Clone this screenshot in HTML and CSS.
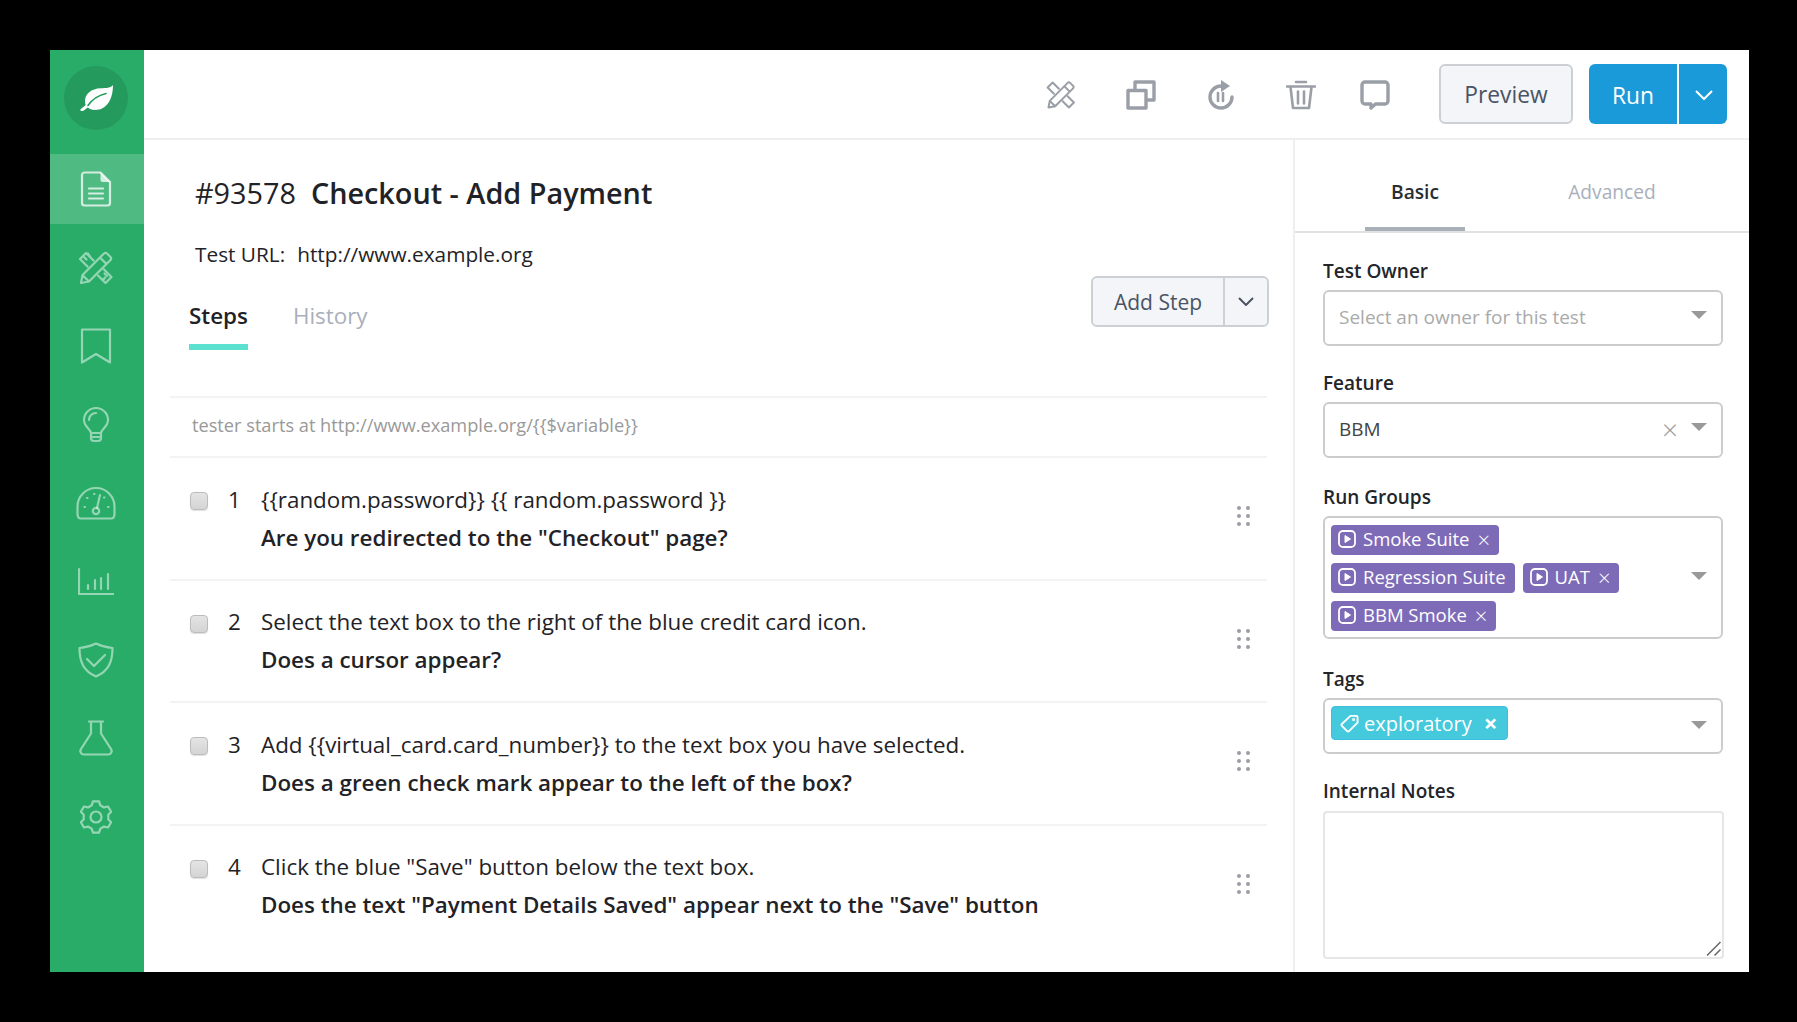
FILE: index.html
```html
<!DOCTYPE html>
<html lang="en">
<head>
<meta charset="utf-8">
<title>Checkout - Add Payment</title>
<link rel="stylesheet" href="styles.css">
</head>
<body>
<div class="window">
  <nav class="sidebar">
    <div class="logo">
      <svg width="33" height="26" viewBox="0 0 33 26"><path class="leaf" d="M33 0C31 3 26 3 21 3.200 11 3.500 5 9 5 16c0 2.500.5 4 1.500 5.500C9 24 12 25 15 25 27 25 33 14 33 0z"/><path class="leaf-stem" d="M9 19.500L2 25"/><path class="leaf-vein" d="M8 20.500C12 14.500 18 10.500 26 8.500"/></svg>
    </div>
    <a class="nav-item active"><svg class="i36" viewBox="0 0 36 36"><path d="M6.500 1.500h16L32 11v21a2.500 2.500 0 0 1-2.500 2.500h-23A2.500 2.500 0 0 1 4 32V4a2.500 2.500 0 0 1 2.500-2.500z"/><path class="soft" d="M22.500 1.500V9a2 2 0 0 0 2 2H32z"/><path d="M11 17.500h14M11 22.500h14M11 27.500h14"/></svg></a>
    <a class="nav-item"><svg class="i36" viewBox="0 0 36 36"><path d="M3 33l1.500-8L26 3.500a2 2 0 0 1 3 0L32.500 7a2 2 0 0 1 0 3L11 31.500zM4.500 25l6.500 6.500M22 7.500l6.500 6.500"/><path d="M15.500 10.500L8 3 2 9l7.500 7.500M20 25.500L27.500 33l6-6L26 19.500M6 7l2.500 2.500M10 3.500L13 8M25 30l2-2.500M29 26l-2.500-2.500"/></svg></a>
    <a class="nav-item"><svg class="i36" viewBox="0 0 36 36"><path d="M4 1.500h28v33L18 26 4 34.500z"/></svg></a>
    <a class="nav-item"><svg class="i36" viewBox="0 0 36 36"><path d="M13 26c0-4-7-6-7-13a12 12 0 0 1 24 0c0 7-7 9-7 13zM13 26v5a3 3 0 0 0 3 3h4a3 3 0 0 0 3-3v-5M13 30h10M11 13a7 7 0 0 1 7-7"/></svg></a>
    <a class="nav-item"><svg class="i40" viewBox="0 0 40 34"><path d="M5 32.500Q1.500 32.500 1.500 28V20.500a18.500 18.500 0 0 1 37 0V28q0 4.500-3.500 4.500z"/><circle cx="20" cy="25" r="3.200"/><path d="M21 22l3-13M8.500 21h.5M11 12h.5M18 8h.5M28 11.500h.5M32 21h.5"/></svg></a>
    <a class="nav-item"><svg class="i36" viewBox="0 0 36 36"><path d="M1 6v25h35M10 26v-4M17 26V17M23 26V15M30 26V11"/></svg></a>
    <a class="nav-item"><svg class="i36" viewBox="0 0 36 36"><path d="M18 1.500C13 4 7 5.500 1.500 6c0 14 4 23 16.500 28.500C30.500 29 34.500 20 34.500 6 29 5.500 23 4 18 1.500z"/><path d="M9 17l7 7 11-11"/></svg></a>
    <a class="nav-item"><svg class="i36" viewBox="0 0 36 36"><path d="M11 1.500h14M13 1.500v12L3 29a3.500 3.500 0 0 0 3 5.500h24a3.500 3.500 0 0 0 3-5.500L23 13.500v-12"/></svg></a>
    <a class="nav-item"><svg class="i36" viewBox="0 0 36 36"><polygon transform="translate(18 18)" points="-4.300,-11.700 -3.050,-15.700 3.050,-15.700 4.300,-11.700 7.980,-9.570 12.070,-10.490 15.120,-5.210 12.280,-2.130 12.280,2.130 15.120,5.210 12.070,10.490 7.980,9.570 4.300,11.700 3.050,15.700 -3.050,15.700 -4.300,11.700 -7.980,9.570 -12.070,10.490 -15.120,5.210 -12.280,2.130 -12.280,-2.130 -15.120,-5.210 -12.070,-10.490 -7.980,-9.570"/><circle cx="18" cy="18" r="5.500"/></svg></a>
  </nav>

  <div class="content">
    <header class="topbar">
      <div class="tools">
        <svg class="tool" viewBox="0 0 36 36"><path d="M3 33l1.500-8L26 3.500a2 2 0 0 1 3 0L32.500 7a2 2 0 0 1 0 3L11 31.500zM4.500 25l6.500 6.500M22 7.500l6.500 6.500"/><path d="M15.500 10.500L8 3 2 9l7.500 7.500M20 25.500L27.500 33l6-6L26 19.500"/></svg>
        <svg class="tool" viewBox="0 0 30 30"><path class="thick" d="M2 10.500h18v17.500H2zM9 10V2h19v18h-7.500"/></svg>
        <svg class="tool" viewBox="0 0 30 30"><path class="thick" d="M15 6a11 11 0 1 0 11 11"/><path class="fill" d="M15 0l9 6-9 6z"/><path class="mid" d="M12 13v8M17 13v8"/></svg>
        <svg class="tool" viewBox="0 0 30 30"><path class="mid" d="M1 6.500h28M10 2h10M4.500 7l2.500 21h16l2.500-21M12 11.500v12M18 11.500v12"/></svg>
        <svg class="tool tool-last" viewBox="0 0 30 30"><path class="thick" d="M5 2h20a3 3 0 0 1 3 3v16a3 3 0 0 1-3 3H15.500L11 28v-4H5a3 3 0 0 1-3-3V5a3 3 0 0 1 3-3z"/></svg>
      </div>
      <button class="btn preview">Preview</button>
      <div class="run">
        <span class="run-label">Run</span>
        <span class="run-caret"><svg width="18" height="10" viewBox="0 0 18 10"><path d="M1 1l8 8 8-8"/></svg></span>
      </div>
    </header>

    <div class="body">
      <main class="test">
        <h1 class="title"><span class="num">#93578</span>Checkout - Add Payment</h1>
        <p class="url"><span class="url-label">Test URL:</span>http://www.example.org</p>
        <div class="tabbar">
          <div class="tabs">
            <span class="tab current">Steps</span>
            <span class="tab">History</span>
          </div>
          <div class="add-step">
            <span class="add-label">Add Step</span>
            <span class="add-caret"><svg width="16" height="9" viewBox="0 0 16 9"><path d="M1 1l7 7 7-7"/></svg></span>
          </div>
        </div>
        <div class="start">tester starts at http://www.example.org/{{$variable}}</div>
        <ol class="steps">
          <li class="step">
            <input class="check" type="checkbox" aria-label="Select step 1"><span class="step-num">1</span>
            <div class="step-text"><p>{{random.password}} {{ random.password }}</p><p class="expect">Are you redirected to the "Checkout" page?</p></div>
            <span class="dots"><i></i><i></i><i></i><i></i><i></i><i></i></span>
          </li>
          <li class="step">
            <input class="check" type="checkbox" aria-label="Select step 2"><span class="step-num">2</span>
            <div class="step-text"><p>Select the text box to the right of the blue credit card icon.</p><p class="expect">Does a cursor appear?</p></div>
            <span class="dots"><i></i><i></i><i></i><i></i><i></i><i></i></span>
          </li>
          <li class="step">
            <input class="check" type="checkbox" aria-label="Select step 3"><span class="step-num">3</span>
            <div class="step-text"><p>Add {{virtual_card.card_number}} to the text box you have selected.</p><p class="expect">Does a green check mark appear to the left of the box?</p></div>
            <span class="dots"><i></i><i></i><i></i><i></i><i></i><i></i></span>
          </li>
          <li class="step">
            <input class="check" type="checkbox" aria-label="Select step 4"><span class="step-num">4</span>
            <div class="step-text"><p>Click the blue "Save" button below the text box.</p><p class="expect">Does the text "Payment Details Saved" appear next to the "Save" button</p></div>
            <span class="dots"><i></i><i></i><i></i><i></i><i></i><i></i></span>
          </li>
        </ol>
      </main>

      <aside class="panel">
        <div class="panel-tabs">
          <span class="ptab current">Basic</span>
          <span class="ptab">Advanced</span>
        </div>
        <div class="fields">
          <div class="field">
            <label class="label">Test Owner</label>
            <div class="select"><span class="placeholder">Select an owner for this test</span><span class="arrow"></span></div>
          </div>
          <div class="field">
            <label class="label">Feature</label>
            <div class="select"><span class="value">BBM</span><span class="clear">×</span><span class="arrow"></span></div>
          </div>
          <div class="field field-run">
            <label class="label">Run Groups</label>
            <div class="select multi">
              <div class="chips">
                <span class="chip"><svg class="play" viewBox="0 0 18 18"><rect x="1" y="1" width="16" height="16" rx="4"/><path d="M7 5.500l5.500 3.500L7 12.500z"/></svg>Smoke Suite<span class="x">×</span></span>
                <span class="chip"><svg class="play" viewBox="0 0 18 18"><rect x="1" y="1" width="16" height="16" rx="4"/><path d="M7 5.500l5.500 3.500L7 12.500z"/></svg>Regression Suite</span>
                <span class="chip"><svg class="play" viewBox="0 0 18 18"><rect x="1" y="1" width="16" height="16" rx="4"/><path d="M7 5.500l5.500 3.500L7 12.500z"/></svg>UAT<span class="x">×</span></span>
                <span class="chip"><svg class="play" viewBox="0 0 18 18"><rect x="1" y="1" width="16" height="16" rx="4"/><path d="M7 5.500l5.500 3.500L7 12.500z"/></svg>BBM Smoke<span class="x">×</span></span>
              </div>
              <span class="arrow"></span>
            </div>
          </div>
          <div class="field field-tags">
            <label class="label">Tags</label>
            <div class="select tagbox">
              <div class="chips">
                <span class="tag"><svg class="tagicon" viewBox="0 0 20 20"><path d="M11 2h6a1.500 1.500 0 0 1 1.500 1.500V9L9.500 18a1.500 1.500 0 0 1-2 0L2 12.500a1.500 1.500 0 0 1 0-2z"/><circle cx="14.300" cy="5.700" r=".6"/></svg>exploratory<span class="tx">×</span></span>
              </div>
              <span class="arrow"></span>
            </div>
          </div>
          <div class="field">
            <label class="label label-notes">Internal Notes</label>
            <div class="notes-wrap">
              <textarea class="notes" aria-label="Internal Notes"></textarea>
              <svg class="grip" width="15" height="15" viewBox="0 0 15 15"><path d="M1 14.500L14.500 1M8.500 14.500l6-6"/></svg>
            </div>
          </div>
        </div>
      </aside>
    </div>
  </div>
</div>
</body>
</html>
```
FILE: styles.css
```css
* { box-sizing: border-box; }
html, body { margin: 0; height: 100%; background: #000; }
body {
  padding: 50px 48px 50px 50px;
  font-family: "Open Sans", "Noto Sans", sans-serif;
  color: #1f2226;
  overflow: hidden;
}
p, h1, ol { margin: 0; padding: 0; }
.window { display: flex; width: 1699px; height: 922px; background: #fff; overflow: hidden; }

/* Sidebar */
.sidebar { flex: 0 0 94px; background: #29ac68; display: flex; flex-direction: column; align-items: stretch; gap: 8.4px; padding-top: 16px; }
.logo { width: 64px; height: 64px; border-radius: 50%; background: #249b5d; margin: 0 0 16px 14px; display: flex; align-items: center; justify-content: center; }
.leaf { fill: #fff; }
.leaf-stem { fill: none; stroke: #fff; stroke-width: 3; stroke-linecap: round; }
.leaf-vein { fill: none; stroke: #249b5d; stroke-width: 1.6; stroke-linecap: round; }
.nav-item { height: 70px; display: flex; align-items: center; justify-content: center; padding-right: 2px; }
.nav-item.active { background: rgba(255,255,255,.18); }
.nav-item svg { fill: none; stroke: rgba(255,255,255,.5); stroke-width: 2.200; stroke-linecap: round; stroke-linejoin: round; }
.nav-item.active svg { stroke: rgba(255,255,255,.75); }
.nav-item.active .soft { fill: rgba(255,255,255,.75); stroke: none; }
.i36 { width: 36px; height: 36px; }
.i40 { width: 40px; height: 34px; }

/* Top bar */
.content { flex: 1; display: flex; flex-direction: column; min-width: 0; }
.topbar { flex: 0 0 90px; display: flex; align-items: center; justify-content: flex-end; padding: 0 22px 0 0; border-bottom: 2px solid #efefef; }
.tools { display: flex; align-items: center; gap: 50px; margin-right: 49px; padding-top: 2px; }
.tool { width: 30px; height: 30px; fill: none; stroke: #9a9ea6; stroke-width: 2.400; stroke-linejoin: round; stroke-linecap: round; }
.tool-last { margin-left: -6px; }
.tool .thick { stroke-width: 3.4; }
.tool .mid { stroke-width: 2.6; }
.tool .fill { fill: #9a9ea6; stroke: none; }
.btn.preview { width: 134px; height: 60px; padding-top: 2px; border: 2px solid #ccd0d6; border-radius: 6px; background: #f4f5f8; color: #4a5464; font: 500 22.800px "Open Sans", sans-serif; }
.run { display: flex; height: 60px; width: 138px; margin-left: 16px; padding-top: 0; background: #1a9ad9; border-radius: 6px; color: #fff; font-size: 22.800px; font-weight: 500; }
.run-label { width: 90px; display: flex; align-items: center; justify-content: center; padding-top: 2px; border-right: 2px solid #fff; }
.run-caret { flex: 1; display: flex; align-items: center; justify-content: center; padding: 2px 0 0 2px; }
.run-caret path { fill: none; stroke: #fff; stroke-width: 2; }

/* Main column */
.body { flex: 1; display: flex; min-height: 0; }
.test { flex: 0 0 1151px; padding: 35px 26px 0; border-right: 2px solid #efefef; overflow: hidden; }
.title { font-size: 28.800px; line-height: 36px; font-weight: 600; padding-left: 25px; color: #1f2226; }
.num { font-weight: 400; margin-right: 15px; }
.url { font-size: 20.800px; line-height: 28px; margin-top: 29px; padding-left: 25px; }
.url-label { margin-right: 12px; }
.tabbar { display: flex; justify-content: space-between; align-items: flex-start; margin: 8px -2px 46px 0; }
.tabs { display: flex; gap: 45px; padding: 26px 0 0 19px; }
.tab { font-size: 22.400px; line-height: 28px; padding-bottom: 14px; border-bottom: 6px solid transparent; color: #a9afbb; }
.tab.current { color: #1f2226; font-weight: 600; border-bottom-color: #5ce1d0; }
.add-step { display: flex; height: 51px; width: 178px; border: 2px solid #ccd0d6; border-radius: 6px; background: #f4f5f8; color: #4a5464; font-size: 21px; font-weight: 500; }
.add-label { flex: 1; display: flex; align-items: center; justify-content: center; border-right: 2px solid #ccd0d6; }
.add-caret { flex: 0 0 42px; display: flex; align-items: center; justify-content: center; }
.add-caret path { fill: none; stroke: #4a5464; stroke-width: 2; }
.start { height: 60px; border-top: 2px solid #f3f3f3; padding: 0 0 4px 22px; display: flex; align-items: center; font-size: 18.200px; color: #999; }
.steps { list-style: none; }
.step { display: flex; align-items: flex-start; height: 122.500px; border-top: 2px solid #f3f3f3; padding: 22.500px 17px 0 20px; }
.check { appearance: none; width: 18px; height: 18px; margin: 11.500px 0 0; flex: none; border: 1.5px solid #bcbcbc; border-radius: 4px; background: linear-gradient(#e4e4e4, #d4d4d4); box-shadow: 0 1px 1px rgba(0,0,0,.12); }
.step-num { flex: none; width: 53px; padding-left: 20px; font-size: 22.400px; line-height: 38px; }
.step-text { flex: 1; font-size: 22.400px; line-height: 38px; }
.expect { font-weight: 600; }
.dots { display: grid; grid-template-columns: 4px 4px; column-gap: 5px; row-gap: 4px; margin-top: 25.500px; }
.dots i { width: 4px; height: 4px; border-radius: 50%; background: #9a9ea6; }

/* Right panel */
.panel { flex: 1; min-width: 0; }
.panel-tabs { height: 93px; border-bottom: 2px solid #dfe1e4; display: flex; padding-left: 70px; }
.ptab { width: 100px; height: 91px; display: flex; align-items: center; justify-content: center; padding: 25px 0 10px; font-size: 19.200px; color: #a9afbb; border-bottom: 4px solid transparent; }
.ptab + .ptab { width: 140px; margin-left: 77px; }
.ptab.current { color: #2a2e33; font-weight: 600; border-bottom-color: #a9b0b8; }
.fields { padding: 25px 0 0 28px; }
.field { margin-bottom: 24px; }
.field-run { margin-top: 26px; }
.field-tags { margin-top: 27px; }
.label { display: block; font-size: 19px; line-height: 26px; font-weight: 600; color: #22262b; margin-bottom: 6px; }
.label-notes { margin-bottom: 7px; }
.select { width: 400px; min-height: 56px; border: 2px solid #ccc; border-radius: 6px; display: flex; align-items: center; padding: 0 14px 2px; font-size: 19px; }
.placeholder { flex: 1; color: #aaa; }
.value { flex: 1; color: #444; }
.clear { font-size: 28px; line-height: 1; color: #999; margin-right: 13px; font-weight: 300; }
.arrow { flex: none; width: 0; height: 0; border: 8px solid transparent; border-top: 8px solid #999; border-bottom: 0; margin-left: auto; margin-top: -4px; }
.select.multi { padding: 6px 14px 6px 6px; height: 123px; }
.select.tagbox { padding: 6px 14px 6px 6px; align-items: flex-start; }
.select.tagbox .arrow { margin-top: 15px; }
.chips { flex: 1; max-width: 340px; display: flex; flex-wrap: wrap; gap: 8px; }
.chip { display: inline-flex; align-items: center; height: 30px; padding: 0 9px 2px 7px; background: #7e6bb8; border-radius: 4px; color: #fff; font-size: 18.500px; }
.play { width: 18px; height: 18px; margin-right: 7px; fill: none; stroke: #fff; stroke-width: 1.800; }
.play path { fill: #fff; stroke-width: 1; }
.x { margin-left: 8px; font-size: 22px; line-height: 1; font-weight: 300; }
.tag { display: inline-flex; align-items: center; height: 34px; padding: 0 10px 0 8px; background: #45c9dc; border: 1px solid #3dbfe0; border-radius: 4px; color: #fff; font-size: 20px; }
.tagicon { width: 19px; height: 19px; margin-right: 5px; fill: none; stroke: #fff; stroke-width: 2; stroke-linejoin: round; }
.tx { margin-left: 12px; font-size: 24px; line-height: 1; font-weight: 700; }
.notes-wrap { position: relative; width: 401px; }
.notes { display: block; width: 100%; height: 148px; border: 2px solid #e6e6e6; border-radius: 4px; outline: none; resize: none; }
.grip { position: absolute; right: 3px; bottom: 3px; fill: none; stroke: #666; stroke-width: 1.500; }
```
